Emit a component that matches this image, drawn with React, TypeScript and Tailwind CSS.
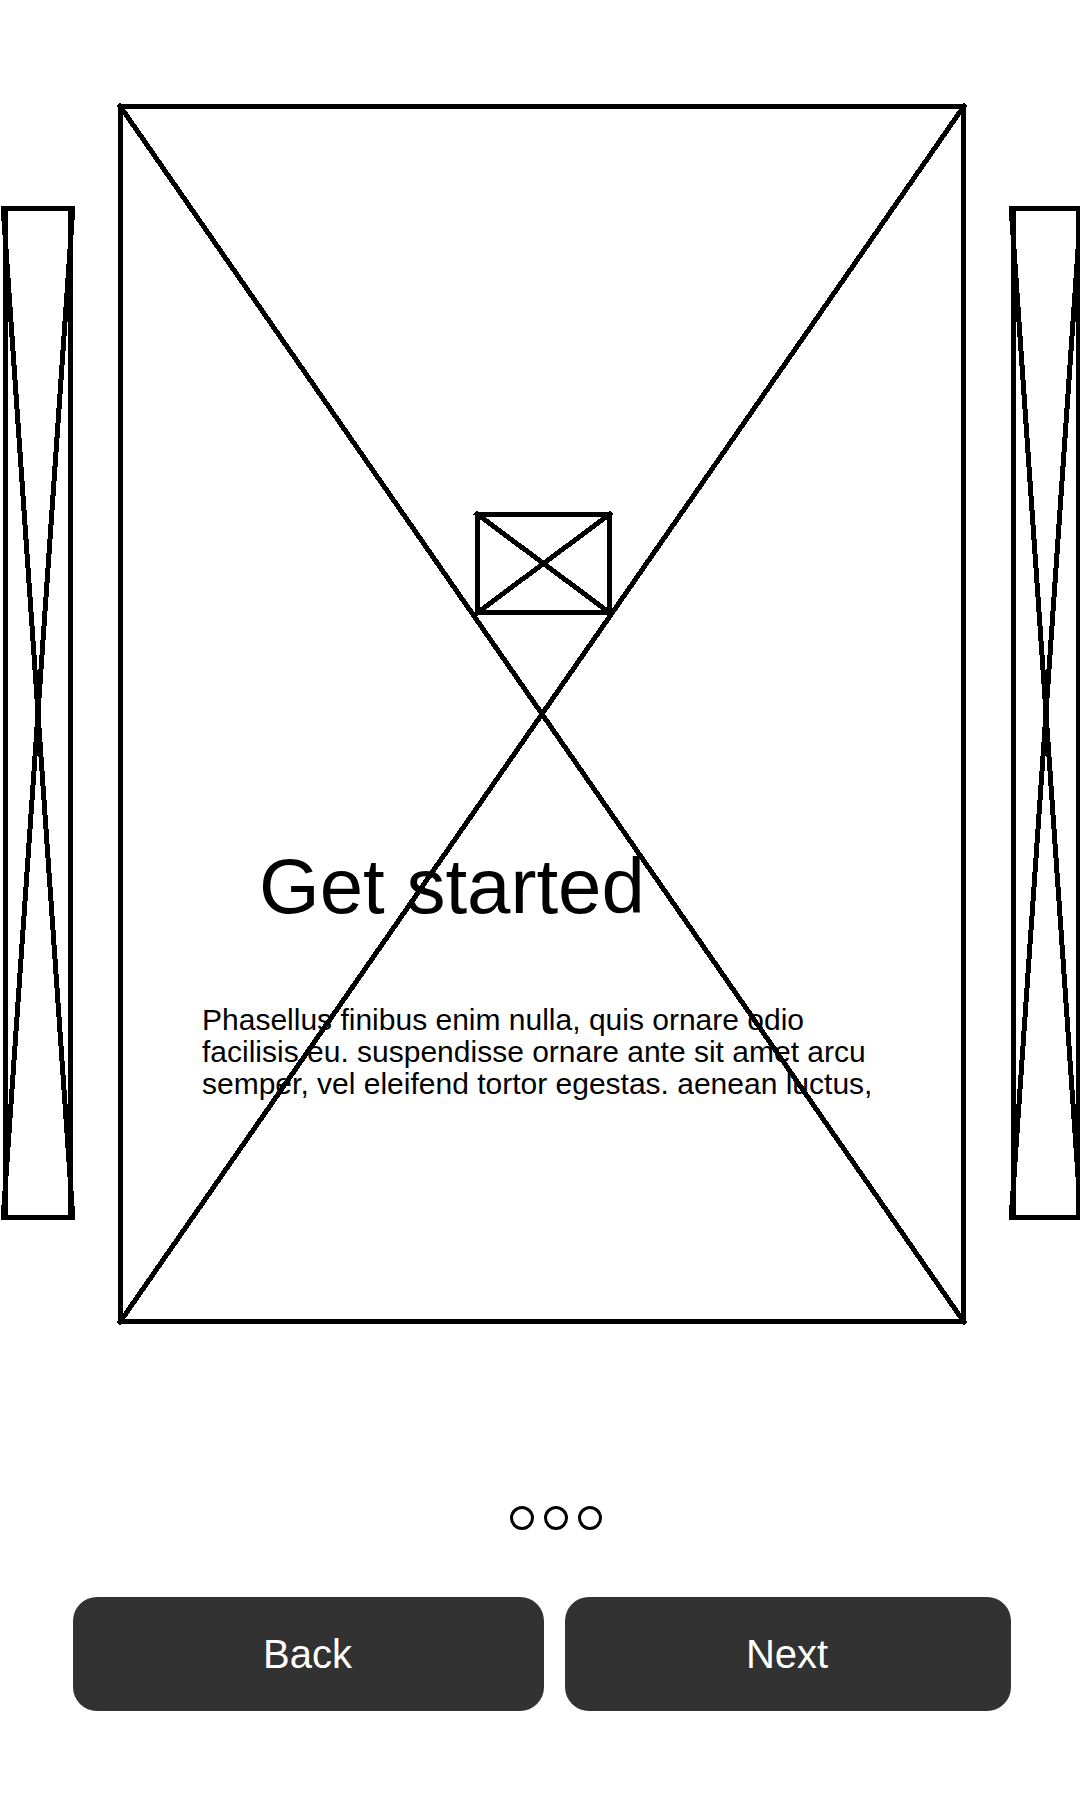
import type { ReactNode } from "react";

/** Diagonals running between the corners of the surrounding frame. */
function Cross() {
  return (
    <svg
      aria-hidden="true"
      className="pointer-events-none absolute -inset-[3px] h-[calc(100%+6px)] w-[calc(100%+6px)] overflow-visible"
      stroke="#000"
      strokeWidth="5"
      strokeLinecap="square"
      shapeRendering="crispEdges"
    >
      <line x1="0" y1="0" x2="100%" y2="100%" />
      <line x1="100%" y1="0" x2="0" y2="100%" />
    </svg>
  );
}

function Placeholder({ className, children }: { className: string; children?: ReactNode }) {
  return (
    <div className={`relative border-[5px] border-black ${className}`}>
      <Cross />
      {children}
    </div>
  );
}

/** Slim neighbouring slide whose diagonals nearly meet its sides. */
function SideSlide() {
  return (
    <div className="relative mt-[102px] mb-[104px] w-[70px] shrink-0 border-[5px] border-black">
      <svg
        aria-hidden="true"
        className="absolute -inset-[5px] h-[calc(100%+10px)] w-[calc(100%+10px)] overflow-visible"
        stroke="#000"
        strokeWidth="5"
        shapeRendering="crispEdges"
      >
        <line x1="0" y1="0" x2="100%" y2="100%" />
        <line x1="100%" y1="0" x2="0" y2="100%" />
      </svg>
    </div>
  );
}

export default function App() {
  return (
    <main className="min-h-screen overflow-hidden bg-white pt-[104px] pb-[80px] font-['Liberation_Sans',Arial,sans-serif] text-black">
      <section aria-label="Introduction" className="-mr-px ml-[3px] flex gap-[45px]">
        <SideSlide />
        <Placeholder className="min-w-0 flex-1 pt-[403px] pb-[219px]">
          <div className="flex justify-center pl-[3px]">
            <Placeholder className="h-[103px] w-[137px]" />
          </div>
          <h1 className="relative mt-[227px] ml-[136px] text-[78px] leading-[88px]">Get started</h1>
          <p className="relative mt-[74px] mr-[60px] ml-[79px] text-[30px] leading-[32px]">
            Phasellus finibus enim nulla, quis ornare odio
            <br />
            facilisis eu. suspendisse ornare ante sit amet arcu
            <br />
            semper, vel eleifend tortor egestas. aenean luctus,
          </p>
        </Placeholder>
        <SideSlide />
      </section>

      <nav aria-label="Slides" className="mt-[182px] flex justify-center gap-[10px] pl-8">
        <button type="button" aria-label="Slide 1" className="size-6 rounded-full border-3 border-black" />
        <button type="button" aria-label="Slide 2" className="size-6 rounded-full border-3 border-black" />
        <button type="button" aria-label="Slide 3" className="size-6 rounded-full border-3 border-black" />
      </nav>

      <div className="mt-[67px] mr-[69px] ml-[73px] grid grid-cols-[471fr_446fr] gap-[21px] text-[40px] leading-[46px] text-white">
        <button type="button" className="rounded-3xl bg-[#323232] py-[34px] pr-0.5">
          Back
        </button>
        <button type="button" className="rounded-3xl bg-[#323232] py-[34px] pr-0.5">
          Next
        </button>
      </div>
    </main>
  );
}
